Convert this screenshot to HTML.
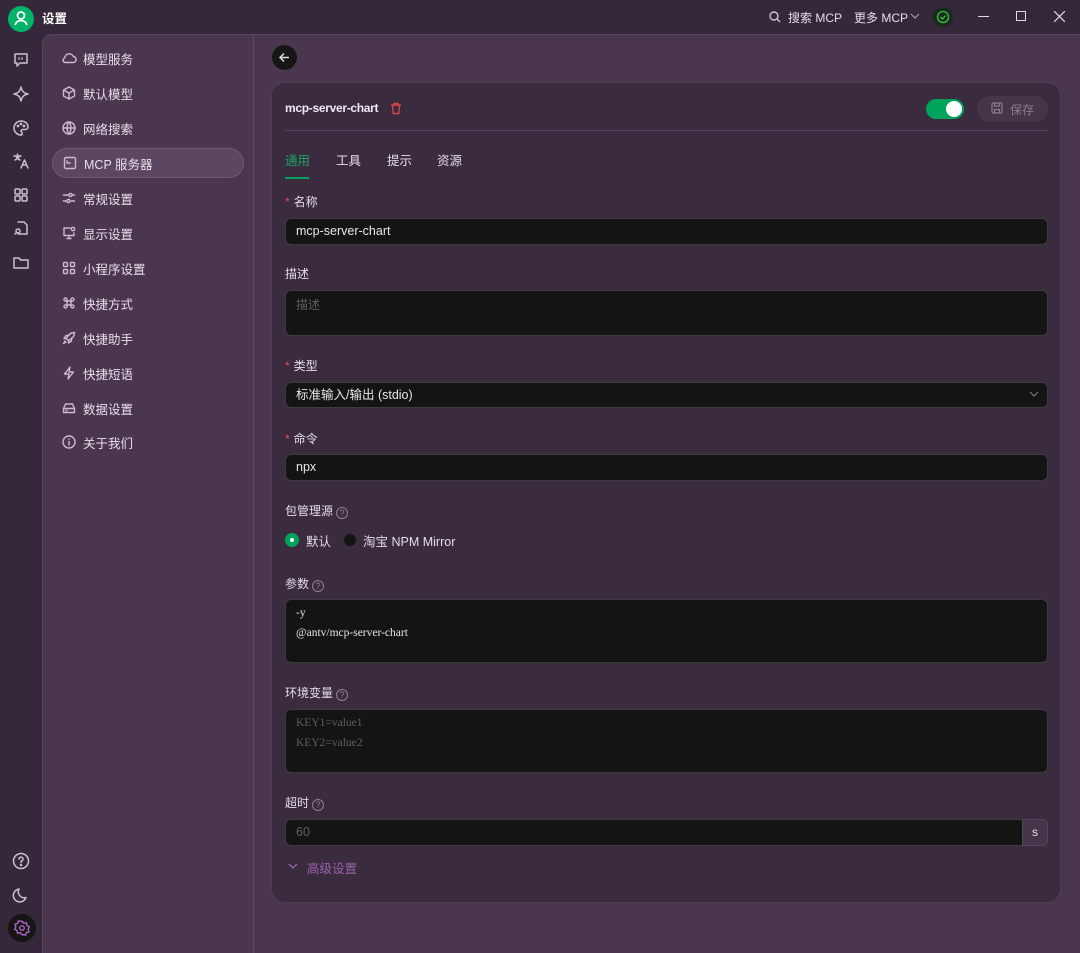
<!DOCTYPE html>
<html><head><meta charset="utf-8"><style>
*{box-sizing:border-box;margin:0;padding:0}
body{width:1080px;height:953px;overflow:hidden;background:#35283a;font-family:"Liberation Sans","Noto Sans CJK SC",sans-serif;color:#e6dce8;font-size:13px;position:relative}
.a{position:absolute}
.panel{left:42px;top:34px;width:1038px;height:919px;background:#4b3650;border-top-left-radius:10px;border-left:1px solid #5a4560;border-top:1px solid #5a4560}
.divv{left:253px;top:35px;width:1px;height:918px;background:#5e4a64}
.nav{left:52px;width:192px;height:30px;display:flex;align-items:center;padding-left:9px;font-size:12.5px;color:#e8dfe9}
.nav svg{width:16px;height:16px;flex-shrink:0;margin-right:6px;fill:none;stroke:#cbbccd;stroke-width:1.4;stroke-linecap:round;stroke-linejoin:round}
.act{background:#5c4662;border:1px solid #6e5a74;border-radius:15px}
.ic{left:11px;width:20px;height:20px;fill:none;stroke:#cdbfd0;stroke-width:1.5;stroke-linecap:round;stroke-linejoin:round}
.card{left:271px;top:82px;width:790px;height:821px;background:#3a2b3f;border-radius:14px;border:1px solid #4e3c54}
.lbl{left:285px;font-size:12px;color:#e6dce8}
.lbl .r{color:#e5484d;margin-right:4px}
.q{display:inline-block;width:12px;height:12px;border:1px solid #8e8093;border-radius:50%;font-size:9px;line-height:10px;text-align:center;color:#8e8093;margin-left:3px;vertical-align:-1px}
.in{left:285px;width:763px;background:#141414;border:1px solid #3c3c3c;border-radius:6px;font-size:12.5px;padding-left:10px;color:#e6e6e6}
.mono{font-family:"Liberation Serif","Noto Serif CJK SC",serif;font-size:11.5px;line-height:20px;padding-top:2px}
</style></head><body>
<div class="a" style="left:8px;top:6px;width:26px;height:26px;border-radius:50%;background:#00b36b"></div>
<svg class="a" style="left:13px;top:10px" width="16" height="17" viewBox="0 0 16 17" fill="none" stroke="#fff" stroke-width="1.8"><circle cx="8" cy="5.5" r="3.5"/><path d="M2 15c1-3 3.5-4.5 6-4.5s5 1.5 6 4.5"/></svg>
<div class="a" style="left:42px;top:8px;font-size:12.5px;font-weight:bold;color:#fff">设置</div>
<svg class="a" style="left:769px;top:11px" width="12" height="12" fill="none" stroke="#cfc4d2" stroke-width="1.4"><circle cx="5" cy="5" r="4"/><path d="M8 8l3 3"/></svg>
<div class="a" style="left:788px;top:9px;font-size:12px;color:#e6dce8">搜索 MCP</div>
<div class="a" style="left:854px;top:9px;font-size:12px;color:#e6dce8">更多 MCP</div>
<svg class="a" style="left:910px;top:13px" width="10" height="7" fill="none" stroke="#a89bab" stroke-width="1.2"><path d="M1 1l4 4 4-4"/></svg>
<div class="a" style="left:933px;top:7px;width:20px;height:20px;border-radius:50%;background:#1b2a1c"></div>
<svg class="a" style="left:936px;top:10px" width="14" height="14" fill="none" stroke="#3cbf3c" stroke-width="1.3"><circle cx="7" cy="7" r="5.5"/><path d="M4.5 7l2 2 3-3.5"/></svg>
<div class="a" style="left:978px;top:16px;width:11px;height:1px;background:#ddd"></div>
<div class="a" style="left:1016px;top:11px;width:10px;height:10px;border:1.2px solid #ddd"></div>
<svg class="a" style="left:1054px;top:11px" width="11" height="11" stroke="#ddd" stroke-width="1.2"><path d="M0 0l11 11M11 0L0 11"/></svg>

<svg class="ic a" style="top:50px" viewBox="0 0 20 20"><path d="M4 4h12v9H9l-3 3v-3H4z"/><path d="M8 8v1M11 8v1"/></svg>
<svg class="ic a" style="top:84px" viewBox="0 0 20 20"><path d="M10 3c.8 4 2.5 6 7 7-4.5 1-6.2 3-7 7-.8-4-2.5-6-7-7 4.5-1 6.2-3 7-7z"/></svg>
<svg class="ic a" style="top:118px" viewBox="0 0 20 20"><path d="M10 3a7 7 0 1 0 0 14c1.5 0 1.5-2 .5-3s0-2.5 1.5-2.5h2.5A2.5 2.5 0 0 0 17 9c0-3.5-3-6-7-6z"/><circle cx="7" cy="8" r=".6"/><circle cx="10" cy="6" r=".6"/><circle cx="13" cy="8" r=".6"/></svg>
<svg class="ic a" style="top:151px" viewBox="0 0 20 20"><path d="M3 5h7M6.5 3v2M4 9c2-1 4-3 4.5-4M5 5c1 2 2.5 3.5 4 4"/><path d="M10 17l3.5-8 3.5 8M11.5 14h4"/></svg>
<svg class="ic a" style="top:185px" viewBox="0 0 20 20"><rect x="4" y="4" width="5" height="5" rx="1"/><rect x="11" y="4" width="5" height="5" rx="1"/><rect x="4" y="11" width="5" height="5" rx="1"/><rect x="11" y="11" width="5" height="5" rx="1"/></svg>
<svg class="ic a" style="top:218px" viewBox="0 0 20 20"><path d="M7 4h6l3 3v9H7"/><circle cx="7" cy="13" r="2"/><path d="M5.5 14.5 4 16"/></svg>
<svg class="ic a" style="top:252px" viewBox="0 0 20 20"><path d="M3 6h5l1.5 2H17v8H3z"/></svg>
<svg class="ic a" style="top:851px" viewBox="0 0 20 20"><circle cx="10" cy="10" r="7.5"/><path d="M8 8a2 2 0 1 1 2.5 2c-.5.2-.5.7-.5 1.5"/><circle cx="10" cy="14" r=".5"/></svg>
<svg class="ic a" style="top:885px" viewBox="0 0 20 20"><path d="M15 12.5A6 6 0 0 1 8 4a6.5 6.5 0 1 0 7 8.5z"/></svg>
<div class="a" style="left:8px;top:914px;width:28px;height:28px;border-radius:50%;background:#161616"></div>
<svg class="a" style="left:13px;top:919px" width="18" height="18" viewBox="0 0 20 20" fill="none" stroke="#b266c8" stroke-width="1.5"><circle cx="10" cy="10" r="2.5"/><path d="M10 2.5l2 2.2 3-.4.6 2.9 2.6 1.6-1.4 2.6 1 2.8-2.9.9-1 2.8-2.9-.6L10 17.5l-2-2.2-3 .4-.6-2.9-2.6-1.6 1.4-2.6-1-2.8 2.9-.9 1-2.8 2.9.6z"/></svg>

<div class="a panel"></div>
<div class="a divv"></div>

<div class="a nav" style="top:43px"><svg viewBox="0 0 16 16"><path d="M4.5 12.5h7.5a3 3 0 0 0 .3-6A4.5 4.5 0 0 0 3.7 8 2.3 2.3 0 0 0 4.5 12.5z"/></svg>模型服务</div>
<div class="a nav" style="top:78px"><svg viewBox="0 0 16 16"><path d="M8 2l5.5 3v6L8 14l-5.5-3V5zM2.5 5L8 8l5.5-3M8 8v6"/></svg>默认模型</div>
<div class="a nav" style="top:113px"><svg viewBox="0 0 16 16"><circle cx="8" cy="8" r="6"/><path d="M2 8h12M8 2c-2.5 3-2.5 9 0 12M8 2c2.5 3 2.5 9 0 12"/></svg>网络搜索</div>
<div class="a nav act" style="top:148px"><svg viewBox="0 0 16 16"><rect x="2.5" y="2.5" width="11" height="11" rx="1.5"/><path d="M5 6v2h3"/></svg>MCP 服务器</div>
<div class="a nav" style="top:183px"><svg viewBox="0 0 16 16"><path d="M2.5 5h5M10.5 11h3M2.5 11h3M12 5h1.5"/><circle cx="9.5" cy="5" r="1.6"/><circle cx="7.5" cy="11" r="1.6"/></svg>常规设置</div>
<div class="a nav" style="top:218px"><svg viewBox="0 0 16 16"><path d="M9 3H3v7.5h10V8M6 13.5h4M8 10.5v3"/><circle cx="12" cy="4" r="1.7"/></svg>显示设置</div>
<div class="a nav" style="top:253px"><svg viewBox="0 0 16 16"><rect x="2.5" y="2.5" width="4" height="4" rx=".8"/><rect x="9.5" y="2.5" width="4" height="4" rx=".8"/><rect x="2.5" y="9.5" width="4" height="4" rx=".8"/><rect x="9.5" y="9.5" width="4" height="4" rx=".8"/></svg>小程序设置</div>
<div class="a nav" style="top:288px"><svg viewBox="0 0 16 16"><path d="M6 6V4.5A1.5 1.5 0 1 0 4.5 6H11.5A1.5 1.5 0 1 0 10 4.5V11.5A1.5 1.5 0 1 0 11.5 10H4.5A1.5 1.5 0 1 0 6 11.5V6"/></svg>快捷方式</div>
<div class="a nav" style="top:323px"><svg viewBox="0 0 16 16"><path d="M13.5 2.5c-4 0-6.5 2.5-8 6l2 2c3.5-1.5 6-4 6-8zM5.5 8.5H3l2-3h3M7.5 10.5V13l3-2V8M4 11l-1.5 2.5L5 12"/></svg>快捷助手</div>
<div class="a nav" style="top:358px"><svg viewBox="0 0 16 16"><path d="M9 2L3.5 9H8l-1 5 5.5-7H8z"/></svg>快捷短语</div>
<div class="a nav" style="top:393px"><svg viewBox="0 0 16 16"><path d="M2.5 8.5l2-4.5h7l2 4.5v4h-11zM2.5 8.5h11M5 10.5h1"/></svg>数据设置</div>
<div class="a nav" style="top:427px"><svg viewBox="0 0 16 16"><circle cx="8" cy="8" r="6"/><path d="M8 7.5V11M8 5v.3"/></svg>关于我们</div>

<div class="a" style="left:272px;top:45px;width:25px;height:25px;border-radius:50%;background:#161616"></div>
<svg class="a" style="left:278px;top:51px" width="13" height="13" fill="none" stroke="#ddd" stroke-width="1.5"><path d="M11 6.5H2M6 2.5l-4 4 4 4"/></svg>

<div class="a card"></div>
<div class="a" style="left:285px;top:101px;font-size:12px;font-weight:bold;color:#f0e8f2;letter-spacing:-0.3px">mcp-server-chart</div>
<svg class="a" style="left:390px;top:102px" width="12" height="13" fill="none" stroke="#d9434a" stroke-width="1.4"><path d="M1 3h10M4 3V1.5h4V3M2.5 3l.7 8.5h5.6l.7-8.5"/></svg>
<div class="a" style="left:926px;top:99px;width:38px;height:20px;border-radius:10px;background:#00a35c"></div>
<div class="a" style="left:946px;top:101px;width:16px;height:16px;border-radius:50%;background:#fff"></div>
<div class="a" style="left:977px;top:96px;width:71px;height:26px;border-radius:13px;background:#443648;color:#8a7d8d;font-size:12px;padding:5px 0 0 33px">保存</div>
<svg class="a" style="left:991px;top:102px" width="12" height="12" fill="none" stroke="#8a7d8d" stroke-width="1.2"><rect x="1" y="1" width="10" height="10" rx="1.5"/><path d="M3.5 1v3h5V1M3.5 11V7.5h5V11"/></svg>
<div class="a" style="left:285px;top:130px;width:763px;height:1px;background:#55445a"></div>

<div class="a" style="left:285px;top:150px;font-size:12.5px;color:#19a567">通用</div>
<div class="a" style="left:285px;top:177px;width:24px;height:2px;background:#00a35c"></div>
<div class="a" style="left:336px;top:150px;font-size:12.5px">工具</div>
<div class="a" style="left:387px;top:150px;font-size:12.5px">提示</div>
<div class="a" style="left:437px;top:150px;font-size:12.5px">资源</div>

<div class="a lbl" style="top:193px"><span class="r">*</span>名称</div>
<div class="a in" style="top:218px;height:27px;line-height:25px">mcp-server-chart</div>
<div class="a lbl" style="top:265px">描述</div>
<div class="a in" style="top:290px;height:46px;color:#5e5e5e;font-size:12px;padding-top:5px">描述</div>
<div class="a lbl" style="top:357px"><span class="r">*</span>类型</div>
<div class="a in" style="top:382px;height:26px;line-height:24px">标准输入/输出 (stdio)</div>
<svg class="a" style="left:1029px;top:391px" width="10" height="7" fill="none" stroke="#777" stroke-width="1.2"><path d="M1 1l4 4 4-4"/></svg>
<div class="a lbl" style="top:430px"><span class="r">*</span>命令</div>
<div class="a in" style="top:454px;height:27px;line-height:25px">npx</div>
<div class="a lbl" style="top:502px">包管理源<span class="q">?</span></div>
<div class="a" style="left:285px;top:533px;width:14px;height:14px;border-radius:50%;background:#00a35c"></div>
<div class="a" style="left:290px;top:538px;width:4px;height:4px;border-radius:50%;background:#fff"></div>
<div class="a" style="left:306px;top:531px;font-size:12.5px">默认</div>
<div class="a" style="left:343px;top:533px;width:14px;height:14px;border-radius:50%;background:#141414;border:1px solid #333"></div>
<div class="a" style="left:363px;top:531px;font-size:12.5px">淘宝 NPM Mirror</div>
<div class="a lbl" style="top:575px">参数<span class="q">?</span></div>
<div class="a in mono" style="top:599px;height:64px;padding-top:3px">-y<br>@antv/mcp-server-chart</div>
<div class="a lbl" style="top:684px">环境变量<span class="q">?</span></div>
<div class="a in mono" style="top:709px;height:64px;padding-top:3px;color:#5e5e5e">KEY1=value1<br>KEY2=value2</div>
<div class="a lbl" style="top:794px">超时<span class="q">?</span></div>
<div class="a in" style="top:819px;height:27px;line-height:25px;color:#5e5e5e;width:738px;border-radius:6px 0 0 6px">60</div>
<div class="a" style="left:1022px;top:819px;width:26px;height:27px;background:#443648;border:1px solid #55445a;border-radius:0 6px 6px 0;font-size:12px;text-align:center;line-height:25px">s</div>
<svg class="a" style="left:288px;top:863px" width="10" height="7" fill="none" stroke="#9a62a8" stroke-width="1.3"><path d="M1 1l4 4 4-4"/></svg>
<div class="a" style="left:307px;top:858px;font-size:12.5px;color:#9a62a8">高级设置</div>
</body></html>
